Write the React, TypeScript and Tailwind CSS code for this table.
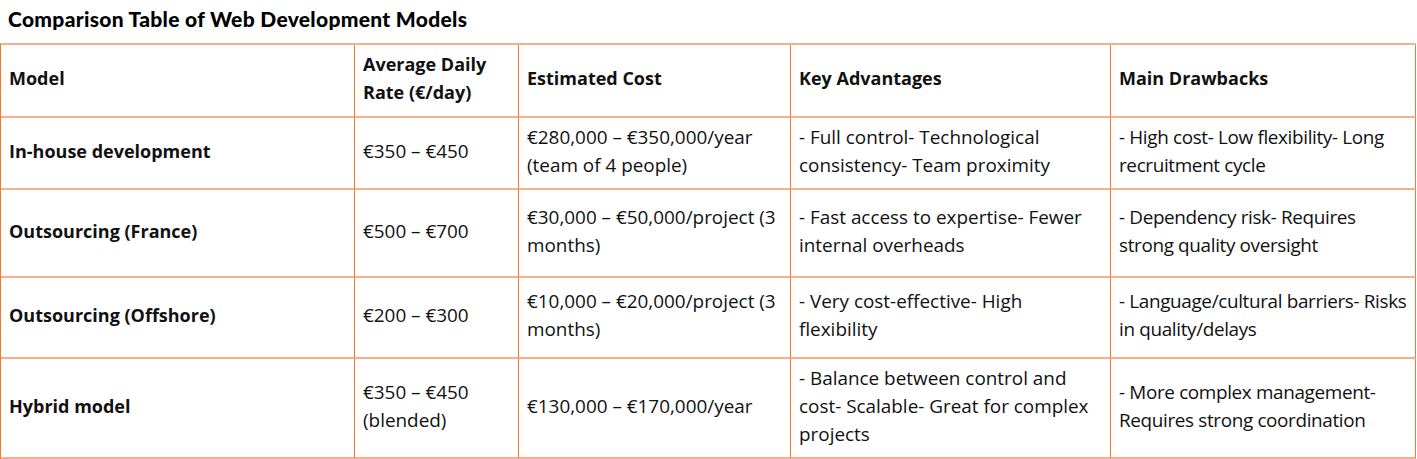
import React from 'react';

type Row = {
  model: string;
  rate: string[];
  cost: string[];
  pros: string[];
  cons: string[];
  h: string;
};

// line breaks follow the original document's wrapping
const ROWS: Row[] = [
  {
    model: 'In-house development',
    rate: ['€350 – €450'],
    cost: ['€280,000 – €350,000/year', '(team of 4 people)'],
    pros: ['- Full control- Technological', 'consistency- Team proximity'],
    cons: ['- High cost- Low flexibility- Long', 'recruitment cycle'],
    h: 'h-[72px]',
  },
  {
    model: 'Outsourcing (France)',
    rate: ['€500 – €700'],
    cost: ['€30,000 – €50,000/project (3', 'months)'],
    pros: ['- Fast access to expertise- Fewer', 'internal overheads'],
    cons: ['- Dependency risk- Requires', 'strong quality oversight'],
    h: 'h-[88px]',
  },
  {
    model: 'Outsourcing (Offshore)',
    rate: ['€200 – €300'],
    cost: ['€10,000 – €20,000/project (3', 'months)'],
    pros: ['- Very cost-effective- High', 'flexibility'],
    cons: ['- Language/cultural barriers- Risks', 'in quality/delays'],
    h: 'h-[81px]',
  },
  {
    model: 'Hybrid model',
    rate: ['€350 – €450', '(blended)'],
    cost: ['€130,000 – €170,000/year'],
    pros: ['- Balance between control and', 'cost- Scalable- Great for complex', 'projects'],
    cons: ['- More complex management-', 'Requires strong coordination'],
    h: 'h-[100px]',
  },
];

// vertical rules are a strong thin orange, horizontal rules a paler 2px band
const cell =
  'flex items-center pl-[8px] pb-[5px] border-r border-r-[#f37b2d] border-b-2 border-b-[#f8b08a] text-[#111] overflow-hidden';

const Lines = ({ lines }: { lines: string[] }) => (
  <div className="whitespace-nowrap">
    {lines.map((l, i) => (
      <div key={i}>{l}</div>
    ))}
  </div>
);

const App: React.FC = () => {
  return (
    <div className="w-[1417px] h-[459px] bg-white overflow-hidden font-['Open_Sans',sans-serif]">
      {/* Title */}
      <div className="h-[43px] pl-[8px] pt-[5px]">
        <h1 className="font-['Lato',sans-serif] font-black text-[21px] leading-[28px] text-black tracking-[0.3px]">
          Comparison Table of Web Development Models
        </h1>
      </div>

      {/* Table */}
      <div className="grid grid-cols-[354px_164px_272px_320px_305px] w-[1416px] border-l border-l-[#f37b2d] border-t-2 border-t-[#f8b08a]">
        {[['Model'], ['Average Daily', 'Rate (€/day)'], ['Estimated Cost'], ['Key Advantages'], ['Main Drawbacks']].map((t, i) => (
          <div
            key={i}
            className={`${cell} h-[73px] font-bold text-[18px] leading-[28px] ${i === 0 ? 'pl-[7px]' : ''}`}
          >
            <Lines lines={t} />
          </div>
        ))}

        {ROWS.map((r) => (
          <React.Fragment key={r.model}>
            <div className={`${cell} ${r.h} pl-[7px] font-bold text-[18px] leading-[28px]`}>{r.model}</div>
            <div className={`${cell} ${r.h} text-[18.9px] leading-[28px]`}>
              <Lines lines={r.rate} />
            </div>
            <div className={`${cell} ${r.h} text-[18.9px] leading-[28px]`}>
              <Lines lines={r.cost} />
            </div>
            <div className={`${cell} ${r.h} text-[18.9px] leading-[28px]`}>
              <Lines lines={r.pros} />
            </div>
            <div className={`${cell} ${r.h} text-[18.9px] leading-[28px] tracking-[-0.35px]`}>
              <Lines lines={r.cons} />
            </div>
          </React.Fragment>
        ))}
      </div>
    </div>
  );
};

export default App;
